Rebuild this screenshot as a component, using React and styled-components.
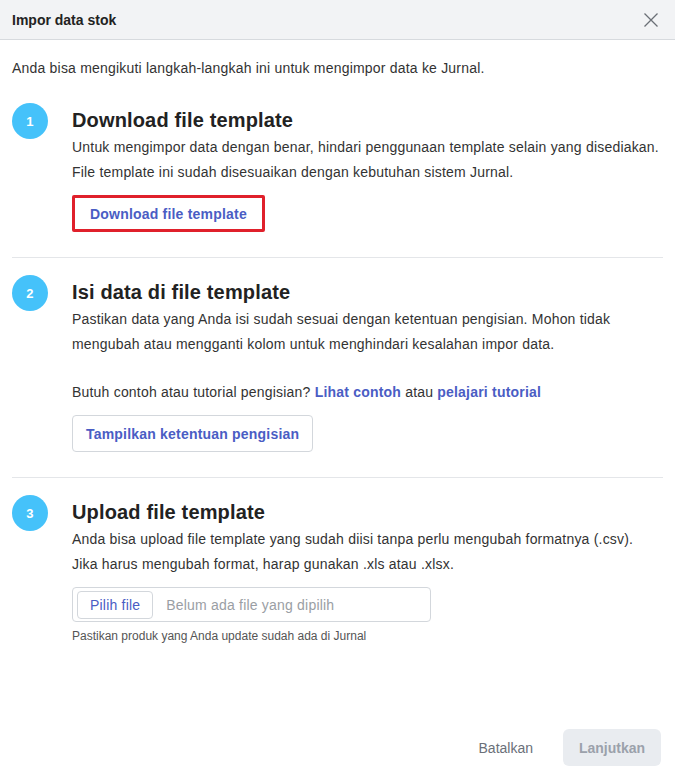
import styled, { createGlobalStyle } from 'styled-components'

const GlobalStyle = createGlobalStyle`
  html, body { margin: 0; padding: 0; background: #fff; }
  body { font-family: "Liberation Sans", Arial, sans-serif; color: #333; }
  * { box-sizing: border-box; }
`

const Modal = styled.div`
  width: 675px;
  height: 782px;
  display: flex;
  flex-direction: column;
  background: #fff;
  letter-spacing: 0.2px;
`

const Header = styled.div`
  height: 40px;
  flex: none;
  display: flex;
  align-items: center;
  justify-content: space-between;
  padding: 0 16px 0 12px;
  background: #f2f3f5;
  border-bottom: 1px solid #d7dade;
`

const HeaderTitle = styled.h1`
  margin: 0;
  font-size: 14px;
  font-weight: bold;
  color: #222;
  letter-spacing: 0;
`

const CloseButton = styled.button`
  border: 0;
  background: none;
  padding: 0;
  display: flex;
  cursor: pointer;
`

const Body = styled.div`
  flex: 1;
  padding: 18px 12px 0;
`

const Intro = styled.p`
  margin: 0 0 8px;
  font-size: 14px;
  line-height: 20px;
`

const Step = styled.section`
  display: flex;
  gap: 24px;
  padding: 17px 0 25px;
  border-bottom: ${p => (p.$last ? 'none' : '1px solid #e4e6e9')};
`

const Badge = styled.div`
  flex: none;
  width: 36px;
  height: 36px;
  border-radius: 50%;
  background: #45c2fa;
  color: #fff;
  font-size: 13px;
  font-weight: bold;
  display: flex;
  align-items: center;
  justify-content: center;
`

const Content = styled.div`
  flex: 1;
  display: flex;
  flex-direction: column;
  align-items: flex-start;
`

const StepTitle = styled.h2`
  margin: 3px 0 0;
  font-size: 20px;
  line-height: 28px;
  font-weight: bold;
  color: #222;
  letter-spacing: 0.15px;
`

const Desc = styled.p`
  margin: ${p => (p.$gap ? '23px 0 0' : '1px 0 0')};
  font-size: 14px;
  line-height: 25px;
  color: #333;
`

const Link = styled.a`
  color: #4a5dc4;
  font-weight: bold;
  text-decoration: none;
`

const OutlineButton = styled.button`
  margin-top: 10px;
  height: 37px;
  padding: 0 ${p => (p.$highlight ? '15px' : '13px')};
  background: #fff;
  border: ${p => (p.$highlight ? '3px solid #e0202b' : '1px solid #d3d7dc')};
  border-radius: ${p => (p.$highlight ? '2px' : '4px')};
  color: #4a5dc4;
  font-family: inherit;
  font-size: 14px;
  font-weight: bold;
  letter-spacing: 0.2px;
  cursor: pointer;
`

const FileField = styled.div`
  margin-top: 10px;
  width: 359px;
  height: 35px;
  border: 1px solid #d3d7dc;
  border-radius: 4px;
  display: flex;
  align-items: center;
  gap: 13px;
  padding: 0 4px;
`

const PickButton = styled.button`
  height: 28px;
  padding: 0 12px;
  background: #fff;
  border: 1px solid #d3d7dc;
  border-radius: 4px;
  color: #4a5dc4;
  font-family: inherit;
  font-size: 14px;
  letter-spacing: 0.2px;
  cursor: pointer;
`

const Placeholder = styled.span`
  font-size: 14px;
  color: #9a9ea4;
`

const Hint = styled.p`
  margin: 5px 0 0;
  font-size: 12px;
  line-height: 18px;
  color: #555;
  letter-spacing: 0;
`

const Footer = styled.div`
  flex: none;
  display: flex;
  justify-content: flex-end;
  align-items: center;
  gap: 14px;
  padding: 0 14px 16px;
`

const TextButton = styled.button`
  height: 37px;
  padding: 0 16px;
  border: 0;
  background: none;
  color: #6b7079;
  font-family: inherit;
  font-size: 14px;
  cursor: pointer;
`

const PrimaryButton = styled.button`
  height: 37px;
  width: 98px;
  border: 0;
  border-radius: 6px;
  background: #e9ecf0;
  color: #9ba1ab;
  font-family: inherit;
  font-size: 14px;
  font-weight: bold;
`

export default function App() {
  return (
    <Modal>
      <GlobalStyle />
      <Header>
        <HeaderTitle>Impor data stok</HeaderTitle>
        <CloseButton aria-label="Tutup">
          <svg width="16" height="16" viewBox="0 0 16 16">
            <path d="M1.5 1.5l13 13M14.5 1.5l-13 13" stroke="#6b6f76" strokeWidth="1.3" />
          </svg>
        </CloseButton>
      </Header>
      <Body>
        <Intro>Anda bisa mengikuti langkah-langkah ini untuk mengimpor data ke Jurnal.</Intro>

        <Step>
          <Badge>1</Badge>
          <Content>
            <StepTitle>Download file template</StepTitle>
            <Desc>
              Untuk mengimpor data dengan benar, hindari penggunaan template selain yang disediakan.
              <br />
              File template ini sudah disesuaikan dengan kebutuhan sistem Jurnal.
            </Desc>
            <OutlineButton $highlight>Download file template</OutlineButton>
          </Content>
        </Step>

        <Step>
          <Badge>2</Badge>
          <Content>
            <StepTitle>Isi data di file template</StepTitle>
            <Desc>
              Pastikan data yang Anda isi sudah sesuai dengan ketentuan pengisian. Mohon tidak
              <br />
              mengubah atau mengganti kolom untuk menghindari kesalahan impor data.
            </Desc>
            <Desc $gap>
              Butuh contoh atau tutorial pengisian? <Link href="#">Lihat contoh</Link> atau{' '}
              <Link href="#">pelajari tutorial</Link>
            </Desc>
            <OutlineButton>Tampilkan ketentuan pengisian</OutlineButton>
          </Content>
        </Step>

        <Step $last>
          <Badge>3</Badge>
          <Content>
            <StepTitle>Upload file template</StepTitle>
            <Desc>
              Anda bisa upload file template yang sudah diisi tanpa perlu mengubah formatnya (.csv).
              <br />
              Jika harus mengubah format, harap gunakan .xls atau .xlsx.
            </Desc>
            <FileField>
              <PickButton>Pilih file</PickButton>
              <Placeholder>Belum ada file yang dipilih</Placeholder>
            </FileField>
            <Hint>Pastikan produk yang Anda update sudah ada di Jurnal</Hint>
          </Content>
        </Step>
      </Body>
      <Footer>
        <TextButton>Batalkan</TextButton>
        <PrimaryButton disabled>Lanjutkan</PrimaryButton>
      </Footer>
    </Modal>
  )
}
